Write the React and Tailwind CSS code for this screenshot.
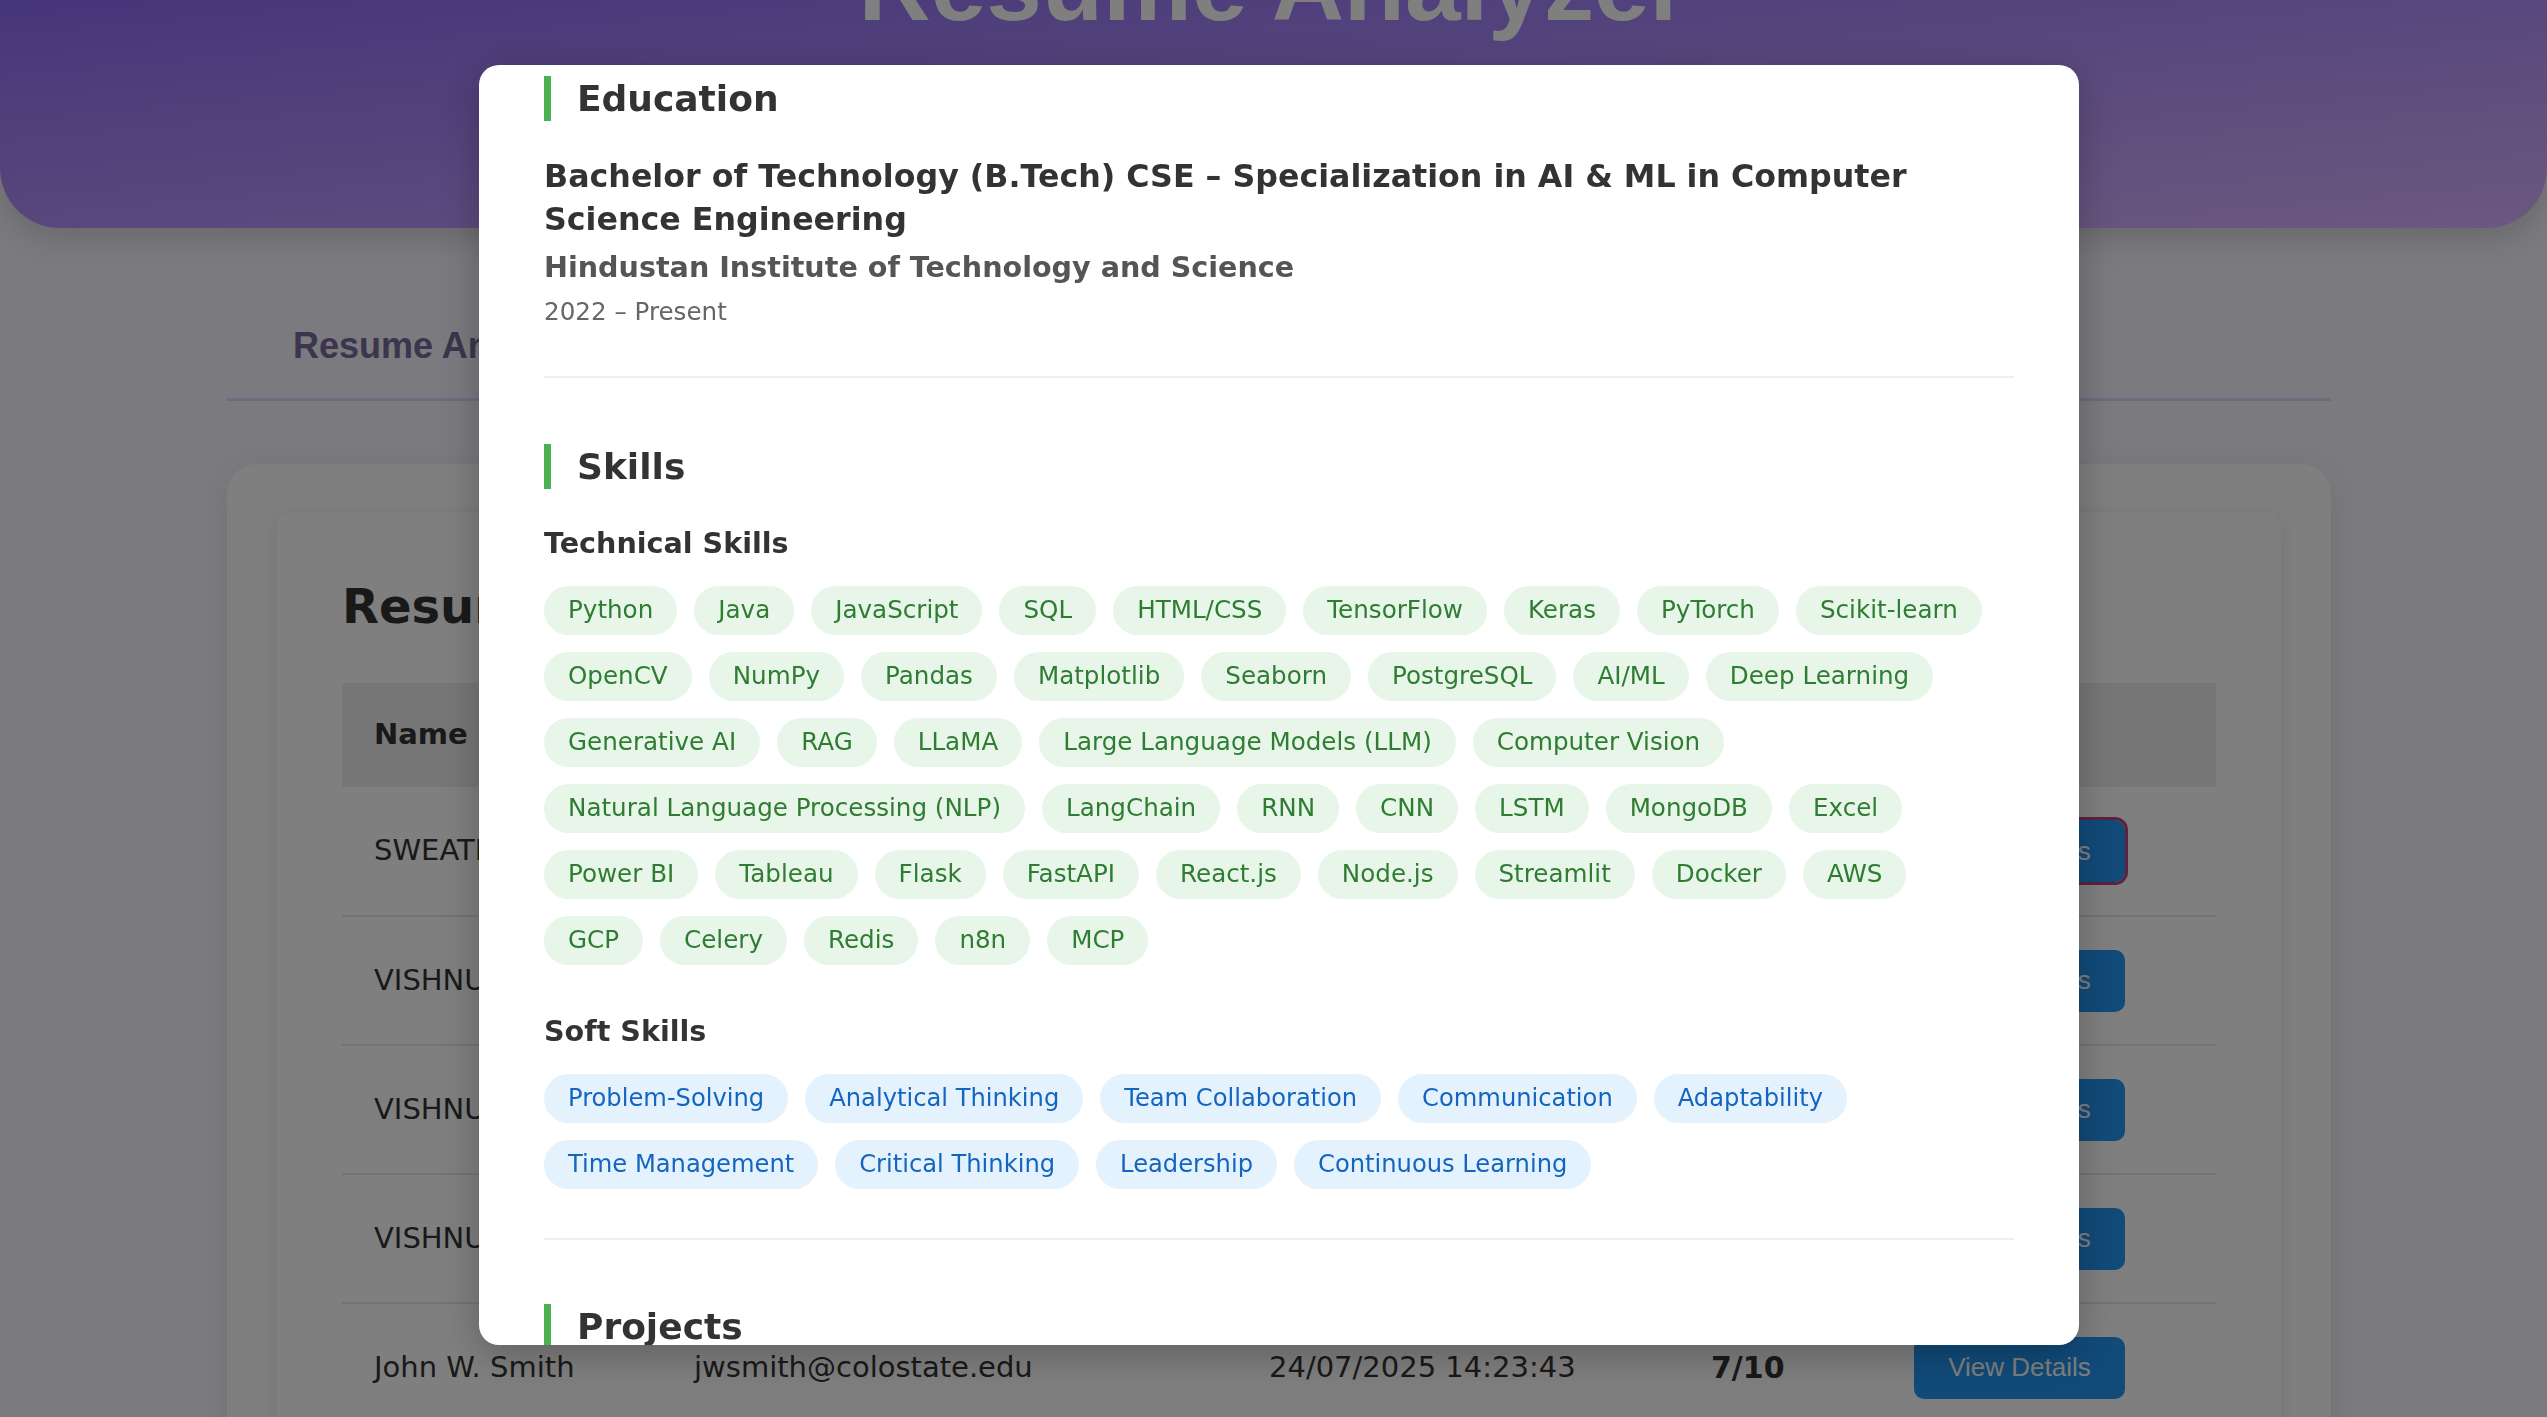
import React from "react";

const techRows = [
  ["Python", "Java", "JavaScript", "SQL", "HTML/CSS", "TensorFlow", "Keras", "PyTorch", "Scikit-learn"],
  ["OpenCV", "NumPy", "Pandas", "Matplotlib", "Seaborn", "PostgreSQL", "AI/ML", "Deep Learning"],
  ["Generative AI", "RAG", "LLaMA", "Large Language Models (LLM)", "Computer Vision"],
  ["Natural Language Processing (NLP)", "LangChain", "RNN", "CNN", "LSTM", "MongoDB", "Excel"],
  ["Power BI", "Tableau", "Flask", "FastAPI", "React.js", "Node.js", "Streamlit", "Docker", "AWS"],
  ["GCP", "Celery", "Redis", "n8n", "MCP"],
];

const softRows = [
  ["Problem-Solving", "Analytical Thinking", "Team Collaboration", "Communication", "Adaptability"],
  ["Time Management", "Critical Thinking", "Leadership", "Continuous Learning"],
];

const resumes = [
  { name: "SWEATHA R", email: "sweatha.r@gmail.com", date: "25/07/2025 10:12:05", score: "8/10" },
  { name: "VISHNU VARDHAN", email: "vishnu.v@gmail.com", date: "24/07/2025 18:40:11", score: "8/10" },
  { name: "VISHNU VARDHAN", email: "vishnu.v@gmail.com", date: "24/07/2025 18:02:37", score: "8/10" },
  { name: "VISHNU VARDHAN", email: "vishnu.v@gmail.com", date: "24/07/2025 17:55:20", score: "7/10" },
  { name: "John W. Smith", email: "jwsmith@colostate.edu", date: "24/07/2025 14:23:43", score: "7/10" },
];

function Pill({ label, soft }) {
  return (
    <span
      className={`flex h-[49px] items-center rounded-full px-[24px] whitespace-nowrap ${
        soft ? "bg-[#e3f2fd] text-[24.2px] text-[#1565c0]" : "bg-[#e8f5e9] text-[24.6px] text-[#2e7d32]"
      }`}
    >
      {label}
    </span>
  );
}

function PillGroup({ rows, soft }) {
  return (
    <div className="flex flex-col gap-[17px]">
      {rows.map((row, i) => (
        <div key={i} className="flex gap-[17px]">
          {row.map((s) => (
            <Pill key={s} label={s} soft={soft} />
          ))}
        </div>
      ))}
    </div>
  );
}

function SectionTitle({ children }) {
  return (
    <h2 className="border-l-[7px] border-[#4caf50] pl-[26px] text-[36px] leading-[45px] font-bold text-[#333]">
      {children}
    </h2>
  );
}

function ResumeModal() {
  return (
    <div className="fixed left-[479px] top-[65px] z-20 h-[1280px] w-[1600px] overflow-hidden rounded-[20px] bg-white shadow-[0_10px_40px_rgba(0,0,0,0.25)] font-['DejaVu_Sans',sans-serif]">
      <div className="px-[65px] pt-[11px]">
        {/* Education */}
        <SectionTitle>Education</SectionTitle>
        <div className="mt-[34px] pr-[20px]">
          <h3 className="text-[31.7px] leading-[43px] font-bold text-[#333]">
            Bachelor of Technology (B.Tech) CSE – Specialization in AI &amp; ML in Computer Science Engineering
          </h3>
          <p className="mt-[5px] text-[28.6px] leading-[43px] font-bold text-[#555]">
            Hindustan Institute of Technology and Science
          </p>
          <p className="mt-[4px] text-[24.6px] leading-[37px] text-[#666]">2022 – Present</p>
        </div>
        <hr className="mt-[46px] border-0 border-t-2 border-[#eeeeee]" />

        {/* Skills */}
        <div className="mt-[66px]">
          <SectionTitle>Skills</SectionTitle>
          <h4 className="mt-[33px] text-[28.6px] leading-[43px] font-bold text-[#333]">Technical Skills</h4>
          <div className="mt-[21px]">
            <PillGroup rows={techRows} />
          </div>
          <h4 className="mt-[45px] text-[28.6px] leading-[43px] font-bold text-[#333]">Soft Skills</h4>
          <div className="mt-[21px]">
            <PillGroup rows={softRows} soft />
          </div>
        </div>
        <hr className="mt-[49px] border-0 border-t-2 border-[#eeeeee]" />

        {/* Projects */}
        <div className="mt-[64px]">
          <SectionTitle>Projects</SectionTitle>
        </div>
      </div>
    </div>
  );
}

export default function App() {
  return (
    <div className="relative h-[1417px] overflow-hidden bg-[#f6f4fc] font-['DejaVu_Sans',sans-serif]">
      <header className="flex h-[228px] justify-center overflow-hidden rounded-b-[60px] bg-gradient-to-br from-[#8c6cf4] to-[#d8b0fe] shadow-[0_10px_30px_rgba(0,0,0,0.15)]">
        <h1 className="mt-[-65px] text-[100px] leading-none font-bold text-white font-['Liberation_Sans',Arial,sans-serif]">
          Resume Analyzer
        </h1>
      </header>

      <main className="mx-[227px] w-[2104px]">
        <div className="mt-[70px] flex border-b-[3px] border-[#e6d2ff]">
          <button className="pl-[66px] pr-[40px] pt-[26px] pb-[31px] text-[36px] leading-[43px] font-bold text-[#776a9a] font-['Liberation_Sans',Arial,sans-serif]">
            Resume Analysis
          </button>
        </div>

        <section className="mt-[63px] rounded-[30px] bg-white px-[50px] pt-[48px] shadow-[0_6px_30px_rgba(0,0,0,0.08)]">
          <div className="rounded-[16px] bg-white px-[65px] pt-[65px] pb-[40px] shadow-[0_4px_20px_rgba(0,0,0,0.10)]">
            <h2 className="text-[48px] leading-[58px] font-bold text-[#333]">Resume History</h2>
            <table className="mt-[48px] w-full border-collapse text-left text-[29px] text-[#333]">
              <thead>
                <tr className="h-[104px] bg-[#eeeeee]">
                  <th className="w-[320px] pl-[32px] font-bold">Name</th>
                  <th className="w-[575px] pl-[32px] font-bold">Email</th>
                  <th className="w-[442px] pl-[32px] font-bold">Uploaded At</th>
                  <th className="w-[203px] pl-[32px] font-bold">Score</th>
                  <th className="pl-[32px] font-bold">Actions</th>
                </tr>
              </thead>
              <tbody>
                {resumes.map((r, i) => (
                  <tr key={i} className="h-[129px] border-b-2 border-[#e6e6e6]">
                    <td className="pl-[32px] whitespace-nowrap">{r.name}</td>
                    <td className="pl-[32px] whitespace-nowrap">{r.email}</td>
                    <td className="pl-[32px] whitespace-nowrap">{r.date}</td>
                    <td className="pl-[32px] text-[30px] font-bold">{r.score}</td>
                    <td className="pl-[32px]">
                      <button
                        className={`h-[62px] w-[211px] rounded-[10px] bg-[#2196f3] text-[26px] text-white font-['Liberation_Sans',Arial,sans-serif] ${
                          i === 0 ? "outline-[3px] outline-offset-0 outline-solid outline-[#b8447c]" : ""
                        }`}
                      >
                        View Details
                      </button>
                    </td>
                  </tr>
                ))}
              </tbody>
            </table>
          </div>
        </section>
      </main>

      <div className="fixed inset-0 z-10 bg-black/50" />
      <ResumeModal />
    </div>
  );
}
